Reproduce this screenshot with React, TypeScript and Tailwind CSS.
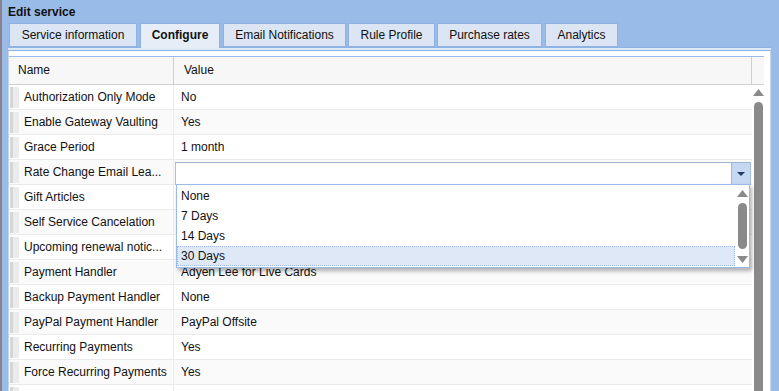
const tabs = [
  { label: "Service information", w: "w-[128px]", ml: "ml-0", active: false },
  { label: "Configure", w: "w-[80px]", ml: "ml-[3px]", active: true },
  { label: "Email Notifications", w: "w-[123px]", ml: "ml-[3px]", active: false },
  { label: "Rule Profile", w: "w-[87px]", ml: "ml-[2px]", active: false },
  { label: "Purchase rates", w: "w-[105px]", ml: "ml-[2px]", active: false },
  { label: "Analytics", w: "w-[73px]", ml: "ml-[3px]", active: false },
];

// values of rows 4-6 are hidden behind the open combo list
const rows: [string, string][] = [
  ["Authorization Only Mode", "No"],
  ["Enable Gateway Vaulting", "Yes"],
  ["Grace Period", "1 month"],
  ["Rate Change Email Lea...", ""],
  ["Gift Articles", ""],
  ["Self Service Cancelation", ""],
  ["Upcoming renewal notic...", ""],
  ["Payment Handler", "Adyen Lee for Live Cards"],
  ["Backup Payment Handler", "None"],
  ["PayPal Payment Handler", "PayPal Offsite"],
  ["Recurring Payments", "Yes"],
  ["Force Recurring Payments", "Yes"],
  ["", ""],
];

const options = ["None", "7 Days", "14 Days", "30 Days"];

const UpArrow = ({ className }: { className?: string }) => (
  <svg width="11" height="7" viewBox="0 0 11 7" className={className}>
    <path d="M5.5 0 L11 7 L0 7 Z" fill="#8a8a8a" />
  </svg>
);

const DownArrow = ({ className }: { className?: string }) => (
  <svg width="11" height="7" viewBox="0 0 11 7" className={className}>
    <path d="M0 0 L11 0 L5.5 7 Z" fill="#8a8a8a" />
  </svg>
);

export default function App() {
  return (
    <div
      className="relative flex w-[779px] h-[391px] overflow-hidden bg-[#99bbe8] text-[12px] text-[#111]"
      style={{ fontFamily: '"Liberation Sans", Arial, sans-serif' }}
    >
      {/* desktop peeking on the left */}
      <div className="w-[2px] shrink-0 bg-[#8e7f8c]" />

      <div className="flex flex-1 min-h-0 flex-col">
        <div className="h-[23px] shrink-0 pl-[6px] pt-[5px] font-bold leading-[14px]">Edit service</div>

        {/* tabs */}
        <div className="flex h-[24px] shrink-0 items-end pl-[7px]">
          {tabs.map((t) => (
            <div
              key={t.label}
              className={`${t.w} ${t.ml} text-center ${
                t.active
                  ? "relative z-10 h-[25px] -mb-px border border-b-0 border-[#8db2e3] bg-[#e6edf7] font-bold leading-[23px]"
                  : "h-[24px] border border-[#8db2e3] bg-[#dbe5f3] leading-[22px]"
              }`}
            >
              {t.label}
            </div>
          ))}
        </div>
        <div className="ml-[6px] mr-[8px] h-[4px] shrink-0 border-t border-b border-[#8db2e3] bg-[#dfe8f6]" />

        {/* panel */}
        <div className="relative min-h-0 flex-1 overflow-hidden ml-[6px] mr-[8px] border-l border-r border-[#c5d5ea] bg-white pt-[5px] pr-[6px]">
          <div className="border-t border-[#99bbe8]">
            {/* header */}
            <div className="flex h-[28px] border-b border-[#d0d0d0] bg-[#f7f7f7]">
              <div className="w-[165px] pl-[9px] border-r border-[#d0d0d0] leading-[27px]">Name</div>
              <div className="w-[578px] pl-[10px] border-r border-[#d0d0d0] leading-[27px]">Value</div>
              <div className="flex-1" />
            </div>

            <div className="flex">
              <div className="w-[743px]">
                {rows.map(([name, value], i) => (
                  <div
                    key={i}
                    className={`flex h-[25px] border-b border-[#ebebeb] ${i % 2 ? "bg-[#fafafa]" : "bg-white"}`}
                  >
                    <div className="flex w-[165px] items-center border-r border-[#ebebeb]">
                      <div className="ml-px h-[21px] w-[9px] border-l-[3px] border-[#d6d6d6] bg-[#ebebeb]" />
                      <div className="pl-[5px] whitespace-nowrap">{name}</div>
                    </div>
                    <div className="flex-1 pl-[7px] leading-[24px] whitespace-nowrap">{value}</div>
                  </div>
                ))}
              </div>
              {/* grid scrollbar */}
              <div className="flex w-[12px] flex-col items-center pt-[4px]">
                <UpArrow />
                <div className="mt-[6px] h-[300px] w-[9px] rounded-t-full bg-[#8a8a8a]" />
              </div>
            </div>
          </div>
        </div>
      </div>

      {/* combo editor */}
      <div className="absolute left-[175px] top-[162px] flex h-[23px] w-[576px] border border-[#a9bfd9] border-t-[#9eb3cf] bg-white">
        <div className="flex-1" />
        <div className="flex w-[19px] items-center justify-center border-l border-[#99bbe8] bg-[#c4d8f1]">
          <svg width="8" height="4" viewBox="0 0 8 4">
            <path d="M0 0 L8 0 L4 4 Z" fill="#1f3a63" />
          </svg>
        </div>
      </div>

      {/* dropdown list */}
      <div className="absolute left-[176px] top-[184px] flex h-[84px] w-[574px] border border-[#99bbe8] bg-white shadow-[2px_3px_4px_rgba(0,0,0,0.3)]">
        <div className="flex-1 pt-px">
          {options.map((o) => (
            <div
              key={o}
              className={
                o === "30 Days"
                  ? "h-[20px] border border-dotted border-[#a3bae9] bg-[#dfe8f6] pl-[3px] leading-[18px]"
                  : "h-[20px] pl-[4px] leading-[20px]"
              }
            >
              {o}
            </div>
          ))}
        </div>
        <div className="flex w-[14px] flex-col items-center pt-[5px]">
          <UpArrow />
          <div className="mt-[6px] h-[46px] w-[9px] rounded-full bg-[#8a8a8a]" />
          <DownArrow className="mt-[7px]" />
        </div>
      </div>
    </div>
  );
}
